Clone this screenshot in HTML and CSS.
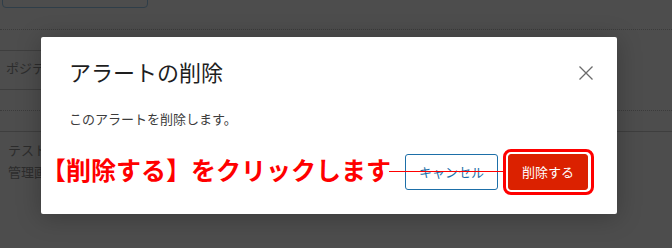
FILE: index.html
```html
<!DOCTYPE html>
<html lang="ja">
<head>
<meta charset="utf-8">
<title>アラートの削除</title>
<link rel="stylesheet" href="styles.css">
</head>
<body>
<div class="page">
  <div class="top-btn"></div>
  <div class="sep-dotted first"></div>
  <div class="head-row"><span class="cell">ポジテ</span></div>
  <div class="sep-dotted second"></div>
  <div class="sep-solid"></div>
  <div class="item-row"><span class="cell">テスト</span><br><span class="cell">管理画</span></div>
</div>

<div class="modal">
  <div class="modal-header">
    <h2 class="modal-title">アラートの削除</h2>
    <button class="modal-close" aria-label="閉じる">
      <svg width="14" height="14" viewBox="0 0 14 14"><path d="M0.5 0.5 L13.5 13.5 M13.5 0.5 L0.5 13.5" stroke="#6b6b6b" stroke-width="1.3" fill="none"/></svg>
    </button>
  </div>
  <p class="modal-body">このアラートを削除します。</p>
  <div class="modal-footer">
    <button class="btn btn-cancel">キャンセル</button>
    <button class="btn btn-delete">削除する</button>
  </div>
  <div class="note">【削除する】をクリックします</div>
  <div class="note-line"></div>
</div>
</body>
</html>
```
FILE: styles.css
```css
html, body {
  margin: 0;
  padding: 0;
}
body {
  width: 672px;
  height: 248px;
  overflow: hidden;
  background: #4d4d4d;
  font-family: "Noto Sans CJK JP", "Noto Sans", sans-serif;
  position: relative;
}
.page {
  color: #2c2c2c;
  font-size: 13px;
}
.top-btn {
  box-sizing: border-box;
  margin-top: -24px;
  margin-left: 2px;
  width: 146px;
  height: 32px;
  border: 1px solid #2f3e49;
  border-radius: 4px;
}
.sep-dotted {
  border-top: 1px dotted #3b3b3b;
}
.sep-dotted.first {
  margin-top: 21px;
}
.head-row {
  margin-top: 20px;
  width: 420px;
  border-top: 1px solid #3e3e3e;
  border-bottom: 1px solid #3e3e3e;
  padding: 6px 0 10px 6px;
  line-height: 22px;
  white-space: nowrap;
}
.sep-dotted.second {
  margin-top: 20px;
}
.sep-solid {
  margin-top: 20px;
  border-top: 1px solid #3e3e3e;
}
.item-row {
  padding: 7px 0 0 8px;
  line-height: 22px;
  white-space: nowrap;
}

.modal {
  position: absolute;
  left: 41px;
  top: 37px;
  width: 576px;
  box-sizing: border-box;
  background: #fff;
  border-radius: 2px;
  box-shadow: 0 3px 24px rgba(0, 0, 0, 0.25);
  padding: 20px 29px 24px 28px;
}
.modal-header {
  display: flex;
  justify-content: space-between;
  align-items: flex-start;
  height: 28px;
}
.modal-title {
  margin: 0;
  font-size: 22px;
  line-height: 28px;
  font-weight: 400;
  color: #1e1e1e;
}
.modal-close {
  width: 24px;
  height: 24px;
  margin-top: 4px;
  margin-right: -10px;
  padding: 0;
  border: 0;
  background: transparent;
  display: flex;
  align-items: center;
  justify-content: center;
}
.modal-body {
  margin: 24px 0 0;
  font-size: 13px;
  line-height: 20px;
  color: #3c3c3c;
}
.modal-footer {
  margin-top: 25px;
  display: flex;
  justify-content: flex-end;
  gap: 10px;
}
.btn {
  box-sizing: border-box;
  height: 36px;
  border-radius: 3px;
  font-family: "Noto Sans CJK JP", sans-serif;
  font-size: 13px;
  line-height: 34px;
  padding: 0 13px;
  margin: 0;
}
.btn-cancel {
  background: #fff;
  border: 1px solid #1d6fa8;
  color: #1d6fa8;
}
.btn-delete {
  position: relative;
  background: #db2100;
  border: 1px solid #db2100;
  color: #fff;
}
.btn-delete::after {
  content: "";
  position: absolute;
  left: -6px;
  top: -6px;
  right: -7px;
  bottom: -6px;
  border: 3px solid #f00;
  border-radius: 8px;
}
.note {
  position: absolute;
  left: 0;
  top: 117px;
  font-size: 25px;
  line-height: 30px;
  font-weight: 700;
  color: #f00;
  white-space: nowrap;
}
.note-line {
  position: absolute;
  left: 348px;
  top: 134px;
  width: 114px;
  height: 1px;
  background: #f00;
}
```
